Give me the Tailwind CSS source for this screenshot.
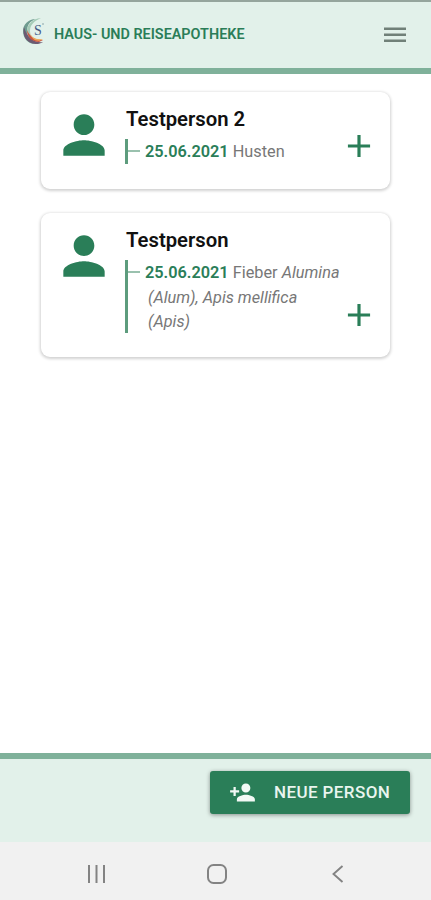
<!DOCTYPE html>
<html lang="de">
<head>
<meta charset="utf-8">
<meta name="viewport" content="width=device-width, initial-scale=1">
<title>Haus- und Reiseapotheke</title>
<script src="https://cdn.jsdelivr.net/npm/@tailwindcss/browser@4"></script>
</head>
<body class="bg-white">
<div class="flex h-[900px] w-[431px] flex-col overflow-hidden font-['Roboto',sans-serif]">
  <header class="flex h-[74px] shrink-0 items-start border-t-2 border-b-[6px] border-t-[#95a59d] border-b-[#7fb19a] bg-[#e2f1ea] pt-4 pr-[25px] pl-[22px]">
    <svg class="h-[28px] w-[25px] shrink-0" viewBox="0 0 25 28" fill="none">
      <path d="M14 1C6 1 1 7 1 13c0 7 5 13 12 13-6-3-8-8-8-13C5 7 8 3 14 1Z" fill="#6f9c90"/>
      <path d="M19 0C10 1 5 7 5 13c0 5 3 9 7 11-3-4-4-7-4-11C8 7 12 3 19 0Z" fill="#a5cbb7"/>
      <path d="M2 9C0 17 4 25 13 26c3 .3 6-.7 8-2C13 25 5 20 2 9Z" fill="#6c5a72"/>
      <path d="M5 12c0 7 5 12 12 12l4-2C13 22 8 19 5 12Z" fill="#c95542"/>
      <path d="M8 14c1 5 5 8 13 7-5 4-12 1-13-7Z" fill="#eda957"/>
      <text x="12" y="16.5" fill="#455985" font-family="Liberation Serif,serif" font-size="14">S</text>
      <circle cx="21" cy="6" r="0.8" fill="#809ca2"/>
    </svg>
    <h1 class="ml-[7px] mt-[7px] text-[14.4px] leading-5 font-semibold whitespace-nowrap text-[#2a7d58]">HAUS- UND REISEAPOTHEKE</h1>
    <svg class="mt-[8px] ml-auto h-[18px] w-[22px]" viewBox="0 0 22 18" stroke="#708078" stroke-width="2.4"><path d="M0 2.8h22M0 8.8h22M0 14.8h22"/></svg>
  </header>

  <main class="flex flex-1 flex-col items-start gap-[24px] pt-[18px] pl-[41px]">
    <section class="flex h-[97px] w-[349px] rounded-[9px] bg-white shadow-[0_1px_3px_1px_rgba(0,0,0,0.18)]">
      <svg class="mt-[12px] ml-[12px] size-[62px] shrink-0" viewBox="0 0 24 24" fill="#2a7e58"><path d="M12 12c2.21 0 4-1.79 4-4s-1.79-4-4-4-4 1.79-4 4 1.79 4 4 4zm0 2c-2.67 0-8 1.34-8 4v2h16v-2c0-2.66-5.33-4-8-4z"/></svg>
      <div class="ml-[10px] w-[215px] shrink-0 pt-[15px]">
        <h2 class="ml-[1px] text-[20.3px] leading-6 font-semibold whitespace-nowrap text-[#111]">Testperson 2</h2>
        <div class="mt-[8px] flex h-[25px] border-l-[3px] border-[#5d9c7d]">
          <span class="mt-[11px] h-[1.5px] w-[12px] bg-[#9ac1ae]"></span>
          <p class="ml-[5px] text-[16.3px] leading-[25px] whitespace-nowrap text-[#777]"><b class="font-semibold text-[#2a7e58]">25.06.2021</b> Husten</p>
        </div>
      </div>
      <svg class="mt-[35px] size-[38px] shrink-0" viewBox="0 0 24 24" fill="#2a7e58"><path d="M19 13h-6v6h-2v-6H5v-2h6V5h2v6h6v2z"/></svg>
    </section>

    <section class="flex h-[144px] w-[349px] rounded-[9px] bg-white shadow-[0_1px_3px_1px_rgba(0,0,0,0.18)]">
      <svg class="mt-[12px] ml-[12px] size-[62px] shrink-0" viewBox="0 0 24 24" fill="#2a7e58"><path d="M12 12c2.21 0 4-1.79 4-4s-1.79-4-4-4-4 1.79-4 4 1.79 4 4 4zm0 2c-2.67 0-8 1.34-8 4v2h16v-2c0-2.66-5.33-4-8-4z"/></svg>
      <div class="ml-[10px] w-[215px] shrink-0 pt-[15px]">
        <h2 class="ml-[1px] text-[20.3px] leading-6 font-semibold whitespace-nowrap text-[#111]">Testperson</h2>
        <div class="mt-[8px] flex h-[73px] border-l-[3px] border-[#5d9c7d]">
          <span class="mt-[11px] h-[1.5px] w-[12px] bg-[#9ac1ae]"></span>
          <p class="ml-[5px] pt-px text-[16.3px] leading-[24.5px] whitespace-nowrap text-[#777]"><b class="font-semibold text-[#2a7e58]">25.06.2021</b> Fieber <i>Alumina</i><br><i class="ml-[3px]">(Alum), Apis mellifica</i><br><i class="ml-[3px]">(Apis)</i></p>
        </div>
      </div>
      <svg class="mt-[83px] size-[38px] shrink-0" viewBox="0 0 24 24" fill="#2a7e58"><path d="M19 13h-6v6h-2v-6H5v-2h6V5h2v6h6v2z"/></svg>
    </section>
  </main>

  <footer class="flex h-[89px] shrink-0 items-start justify-end border-t-[6px] border-[#7fb19a] bg-[#e2f1ea] pt-[12px] pr-[21px]">
    <button class="flex h-[43px] w-[200px] items-center rounded-[3px] bg-[#2a7e58] pl-[19px] text-[#e9f5ef] shadow-[0_1px_4px_rgba(0,0,0,0.4)]">
      <svg class="size-[27px] shrink-0" viewBox="0 0 24 24" fill="#f2f9f5"><path d="M15 12c2.21 0 4-1.79 4-4s-1.79-4-4-4-4 1.79-4 4 1.79 4 4 4zm-9-2V7H4v3H1v2h3v3h2v-3h3v-2H6zm9 4c-2.67 0-8 1.34-8 4v2h16v-2c0-2.66-5.33-4-8-4z"/></svg>
      <span class="ml-[18px] pb-[2px] text-[17px] leading-5 font-medium tracking-[0.4px] whitespace-nowrap">NEUE PERSON</span>
    </button>
  </footer>

  <nav class="flex h-[58px] shrink-0 items-center bg-[#f1f1f1] pt-[5px] pl-[87px]">
    <svg class="h-[20px] w-[19px]" viewBox="0 0 19 20" stroke="#838383" stroke-width="2"><path d="M2 1v18M9.500 1v18M17 1v18"/></svg>
    <svg class="ml-[101px] size-[20px]" viewBox="0 0 20 20" fill="none" stroke="#838383" stroke-width="2"><rect x="1" y="1" width="18" height="18" rx="5.500"/></svg>
    <svg class="ml-[105px] h-[18px] w-[12px]" viewBox="0 0 12 18" fill="none" stroke="#838383" stroke-width="1.900"><path d="M10.500 1 1.500 9l9 8"/></svg>
  </nav>
</div>
</body>
</html>
